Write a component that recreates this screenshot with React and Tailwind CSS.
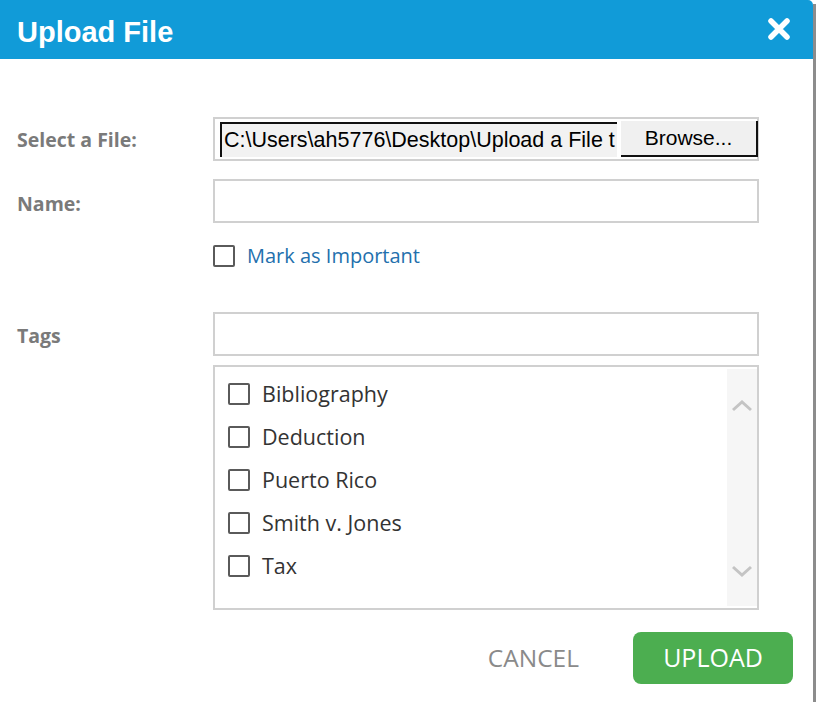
import React from "react";

const items = ["Bibliography", "Deduction", "Puerto Rico", "Smith v. Jones", "Tax"];

function Box({ className = "" }) {
  return <span className={"block w-[22px] h-[22px] border-2 border-[#5a5a5a] rounded-[2px] bg-white shrink-0 " + className} />;
}

export default function App() {
  return (
    <div className="w-[818px] h-[702px] bg-white flex overflow-hidden" style={{ fontFamily: '"Open Sans", sans-serif' }}>
      <div className="w-[813px] h-[702px] flex flex-col bg-white">
        <div className="h-[59px] bg-[#119bd8] rounded-tr-[5px] flex items-center justify-between pl-[17px] pr-[23px] shrink-0">
          <span className="text-white font-bold text-[29px] leading-none mt-[5px]" style={{ fontFamily: '"Liberation Sans", Arial, sans-serif' }}>
            Upload File
          </span>
          <svg width="22" height="22" viewBox="0 0 22 22" className="mt-[-2px]">
            <path d="M3 3 L19 19 M19 3 L3 19" stroke="white" strokeWidth="5.5" strokeLinecap="round" />
          </svg>
        </div>

        <div className="flex flex-col pl-[17px] pt-[58px]">
          <div className="flex items-center h-[44px]">
            <div className="w-[196px] text-[19.5px] font-bold text-[#7a7a7a] mt-[2px]">Select a File:</div>
            <div className="w-[546px] h-[44px] border-2 border-[#d0d0d0] flex items-center pl-[5px] pr-[0px] gap-[4px] bg-white">
              <div className="w-[397px] shrink-0 h-[35px] bg-[#f2f2f2] border-t-2 border-l-2 border-[#111] flex items-center pl-[2px] overflow-hidden whitespace-nowrap text-[21.5px] text-black" style={{ fontFamily: '"Liberation Sans", Arial, sans-serif' }}>
                C:\Users\ah5776\Desktop\Upload a File t
              </div>
              <div className="w-[137px] shrink-0 h-[36px] bg-[#f0f0f0] border-b-2 border-r-2 border-[#111] flex items-center justify-center text-[21px] text-black" style={{ fontFamily: '"Liberation Sans", Arial, sans-serif' }}>
                Browse...
              </div>
            </div>
          </div>

          <div className="flex items-center h-[44px] mt-[18px]">
            <div className="w-[196px] text-[19.5px] font-bold text-[#7a7a7a] mt-[6px]">Name:</div>
            <div className="w-[546px] h-[44px] border-2 border-[#d0d0d0] bg-white" />
          </div>

          <div className="flex items-center h-[23px] mt-[21px] pl-[196px] gap-[12px]">
            <Box />
            <span className="text-[20px] text-[#2370ad]">Mark as Important</span>
          </div>

          <div className="flex items-center h-[44px] mt-[45px]">
            <div className="w-[196px] text-[19.5px] font-bold text-[#7a7a7a] mt-[4px]">Tags</div>
            <div className="w-[546px] h-[44px] border-2 border-[#d0d0d0] bg-white" />
          </div>

          <div className="ml-[196px] mt-[9px] w-[546px] h-[245px] border-2 border-[#d0d0d0] bg-white flex">
            <div className="flex-1 flex flex-col pl-[13px] pt-[16px] gap-[21px]">
              {items.map((t) => (
                <div key={t} className="flex items-center gap-[12px] h-[22px]">
                  <Box />
                  <span className="text-[21.5px] text-[#333]">{t}</span>
                </div>
              ))}
            </div>
            <div className="w-[30px] my-[2px] bg-[#f6f6f6] flex flex-col items-center justify-between pt-[31px] pb-[29px]">
              <svg width="22" height="12" viewBox="0 0 22 12">
                <path d="M2 10 L11 2 L20 10" fill="none" stroke="#c4c4c4" strokeWidth="3" />
              </svg>
              <svg width="22" height="12" viewBox="0 0 22 12">
                <path d="M2 2 L11 10 L20 2" fill="none" stroke="#c4c4c4" strokeWidth="3" />
              </svg>
            </div>
          </div>
        </div>

        <div className="flex justify-end items-center pr-[20px] mt-[22px] gap-[54px]">
          <span className="text-[24.5px] text-[#8a8a8a]">CANCEL</span>
          <div className="w-[160px] h-[52px] rounded-[8px] bg-[#4cae50] flex items-center justify-center text-white text-[25px]">
            UPLOAD
          </div>
        </div>
      </div>
      <div className="w-[3px] h-[702px] bg-[#8c8c8c] mt-[4px]" />
      <div className="flex-1 bg-white" />
    </div>
  );
}
